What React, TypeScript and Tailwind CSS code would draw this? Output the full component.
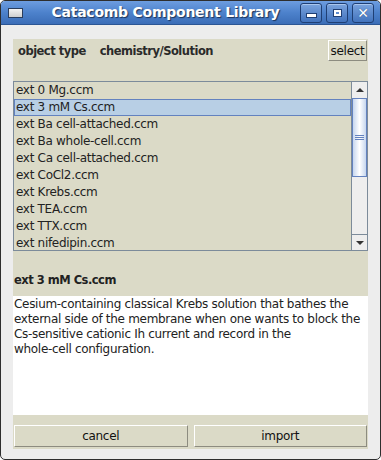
import React from 'react'

const items = [
    'ext 0 Mg.ccm',
    'ext 3 mM Cs.ccm',
    'ext Ba cell-attached.ccm',
    'ext Ba whole-cell.ccm',
    'ext Ca cell-attached.ccm',
    'ext CoCl2.ccm',
    'ext Krebs.ccm',
    'ext TEA.ccm',
    'ext TTX.ccm',
    'ext nifedipin.ccm',
]

function TitleButton({ children }: { children: React.ReactNode }) {
    return (
        <div className="w-[22px] h-[20px] rounded-[3px] border border-[#1f3f74] bg-gradient-to-b from-[#7aa3dd] to-[#4273bd] flex items-center justify-center shadow-[inset_0_1px_0_#a9c6ee]">
            {children}
        </div>
    )
}

function OldButton({ children, className }: { children: React.ReactNode; className?: string }) {
    return (
        <div
            className={
                'flex items-center justify-center bg-[#dbdac7] border border-t-white border-l-white border-b-[#8d8c80] border-r-[#8d8c80] text-[12px] tracking-[-0.3px] text-[#111] ' +
                (className ?? '')
            }
        >
            {children}
        </div>
    )
}

export default function App() {
    return (
        <div
            className="w-[381px] h-[460px] bg-[#ededed] border border-[#2e2e2e] rounded-[5px] overflow-hidden flex flex-col"
            style={{ fontFamily: '"DejaVu Sans", sans-serif' }}
        >
            {/* title bar */}
            <div className="h-[24px] shrink-0 bg-gradient-to-b from-[#6d9de0] via-[#4d82cc] to-[#3b6db7] border-b border-[#2b5594] flex items-center pl-[7px] pr-[6px]">
                <div className="w-[15px] h-[10px] bg-gradient-to-b from-[#f4f4f4] to-[#cfcfcf] border border-[#2a3d5c]" />
                <div className="flex-1 text-center text-white font-bold text-[14px] tracking-[-0.25px] pl-[8px] [text-shadow:1px_1px_1px_#1c3358]">
                    Catacomb Component Library
                </div>
                <div className="flex gap-[4px]">
                    <TitleButton>
                        <div className="w-[9px] h-[3px] bg-white mt-[6px] border border-[#1f3f74] box-content" />
                    </TitleButton>
                    <TitleButton>
                        <div className="w-[7px] h-[6px] border-2 border-white outline outline-1 outline-[#1f3f74]" />
                    </TitleButton>
                    <TitleButton>
                        <span className="text-white font-bold text-[14px] leading-none [text-shadow:0_0_1px_#1f3f74]">✕</span>
                    </TitleButton>
                </div>
            </div>

            <div className="flex-1 flex flex-col pl-[12px] pr-[12px] pt-[14px] pb-[10px]">
                <div className="flex-1 bg-[#dbdac7] flex flex-col">
                    {/* header */}
                    <div className="h-[42px] flex items-start">
                        <div className="flex-1 flex gap-[14px] pl-[5px] pt-[4px] text-[11.5px] tracking-[-0.5px] font-bold text-[#2a2a2a]">
                            <span>object type</span>
                            <span>chemistry/Solution</span>
                        </div>
                        <OldButton className="w-[39px] h-[21px] mt-[1px] mr-[1px]">select</OldButton>
                    </div>

                    {/* list */}
                    <div className="h-[170px] border border-[#7c8b9a] flex">
                        <div className="flex-1 overflow-hidden text-[12px] tracking-[-0.3px] text-[#222]">
                            {items.map((it, i) => (
                                <div
                                    key={it}
                                    className={
                                        i === 1
                                            ? 'h-[17px] leading-[15px] pl-px bg-[#b8cfe5] border border-[#6382bf]'
                                            : 'h-[17px] leading-[17px] pl-[2px]'
                                    }
                                >
                                    {it}
                                </div>
                            ))}
                        </div>
                        <div className="w-[16px] border-l border-[#7c8b9a] flex flex-col bg-[#eeeeee]">
                            <div className="h-[17px] border-b border-[#6382bf] bg-[#eeeeee] flex items-center justify-center">
                                <div className="w-0 h-0 border-l-[4px] border-r-[4px] border-b-[4px] border-l-transparent border-r-transparent border-b-[#333]" />
                            </div>
                            <div className="h-[78px] border border-[#6382bf] border-t-0 bg-gradient-to-r from-[#c6d6ee] via-white to-[#c6d6ee] flex items-center justify-center">
                                <div className="flex flex-col gap-[1px] w-[9px]">
                                    <div className="h-px bg-[#6382bf]" />
                                    <div className="h-px bg-[#6382bf]" />
                                    <div className="h-px bg-[#6382bf]" />
                                </div>
                            </div>
                            <div className="flex-1" />
                            <div className="h-[16px] border-t border-[#7c8b9a] flex items-center justify-center">
                                <div className="w-0 h-0 border-l-[4px] border-r-[4px] border-t-[4px] border-l-transparent border-r-transparent border-t-[#333]" />
                            </div>
                        </div>
                    </div>

                    {/* selected name */}
                    <div className="h-[45px] flex items-end pl-px pb-[7px] text-[11.5px] tracking-[-0.5px] font-bold text-[#222]">
                        ext 3 mM Cs.ccm
                    </div>

                    {/* description */}
                    <div className="h-[119px] bg-white pl-px pt-px text-[12px] tracking-[-0.3px] leading-[15px] text-[#222]">
                        Cesium-containing classical Krebs solution that bathes the external side of the membrane
                        when one wants to block the Cs-sensitive cationic Ih current and record in the
                        <br />
                        whole-cell configuration.
                    </div>

                    {/* buttons */}
                    <div className="flex gap-[6px] pt-[10px] px-px">
                        <OldButton className="flex-1 h-[22px]">cancel</OldButton>
                        <OldButton className="flex-1 h-[22px]">import</OldButton>
                    </div>
                </div>
            </div>
        </div>
    )
}
